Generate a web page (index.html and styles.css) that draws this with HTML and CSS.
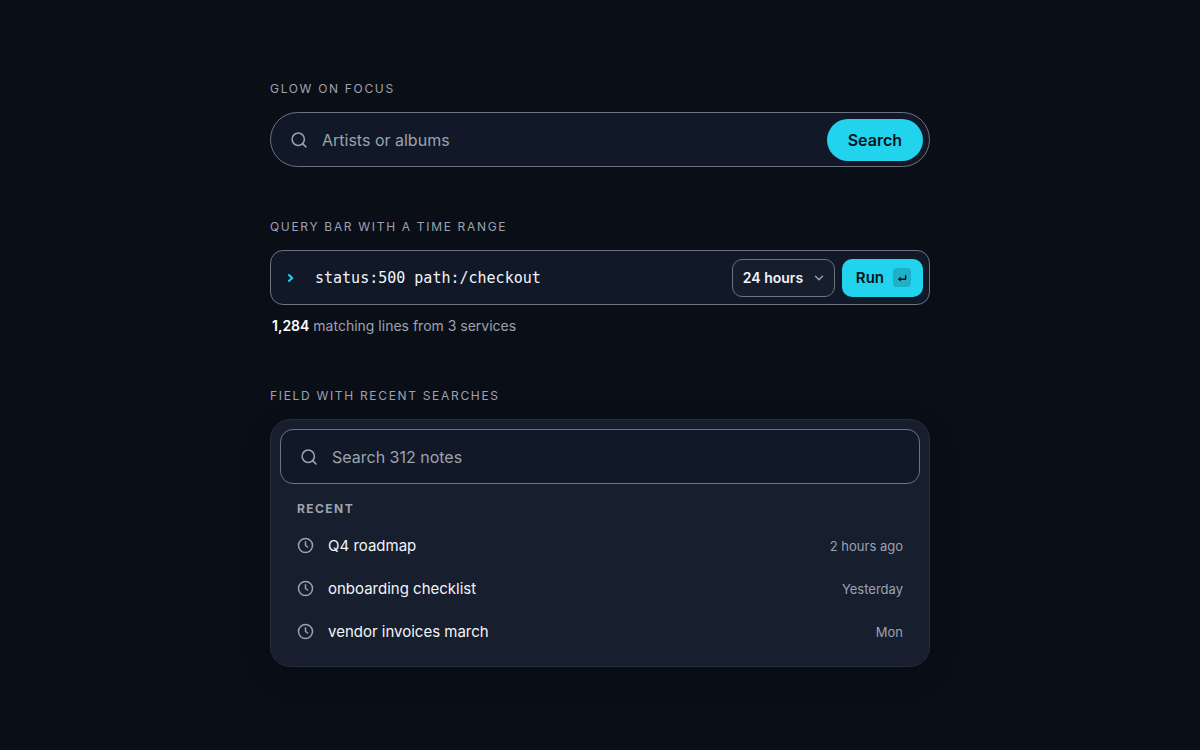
FILE: index.html
```html
<!DOCTYPE html>
<html lang="en">
<head>
<meta charset="UTF-8">
<meta name="viewport" content="width=device-width, initial-scale=1.0">
<title>Search bars</title>
<link rel="stylesheet" href="styles.css">
</head>
<body>
<main class="page">
    <section class="demo">
        <label class="demo-label" for="music">Glow on focus</label>
        <form class="field pill">
            <svg class="icon" viewBox="0 0 24 24" aria-hidden="true"><circle cx="11" cy="11" r="8.2"/><path d="M21.2 21.2l-4.4-4.4"/></svg>
            <input class="input" id="music" type="search" placeholder="Artists or albums">
            <button class="btn btn-round" type="button">Search</button>
        </form>
    </section>

    <section class="demo">
        <label class="demo-label" for="query">Query bar with a time range</label>
        <form class="field query">
            <svg class="prompt" viewBox="0 0 12 12" aria-hidden="true"><path d="M4 3l3.2 3L4 9"/></svg>
            <input class="input mono" id="query" type="text" value="status:500 path:/checkout" spellcheck="false">
            <div class="select-wrap">
                <select class="select" aria-label="Time range">
                    <option>24 hours</option>
                </select>
                <svg class="chevron" viewBox="0 0 10 10" aria-hidden="true"><path d="M1.5 3.2L5 6.8l3.5-3.6"/></svg>
            </div>
            <button class="btn btn-run" type="button">Run
                <kbd class="key"><svg viewBox="0 0 10 10" aria-hidden="true"><path d="M8.6 2.8v3.4H2"/><path class="head" d="M.8 6.2L4 3.8v4.8z"/></svg></kbd>
            </button>
        </form>
        <p class="hint"><strong>1,284</strong> matching lines from 3 services</p>
    </section>

    <section class="demo">
        <label class="demo-label" for="notes">Field with recent searches</label>
        <div class="panel">
            <div class="field">
                <svg class="icon" viewBox="0 0 24 24" aria-hidden="true"><circle cx="11" cy="11" r="8.2"/><path d="M21.2 21.2l-4.4-4.4"/></svg>
                <input class="input" id="notes" type="search" placeholder="Search 312 notes">
            </div>
            <h2 class="recent-title">Recent</h2>
            <ul class="recent">
                <li><button class="recent-item" type="button">
                    <svg class="clock" viewBox="0 0 16 16" aria-hidden="true"><circle cx="8" cy="8" r="6.6"/><path d="M8 4.4V8l2 1.4"/></svg>
                    <span class="recent-name">Q4 roadmap</span><span class="recent-time">2 hours ago</span>
                </button></li>
                <li><button class="recent-item" type="button">
                    <svg class="clock" viewBox="0 0 16 16" aria-hidden="true"><circle cx="8" cy="8" r="6.6"/><path d="M8 4.4V8l2 1.4"/></svg>
                    <span class="recent-name">onboarding checklist</span><span class="recent-time">Yesterday</span>
                </button></li>
                <li><button class="recent-item" type="button">
                    <svg class="clock" viewBox="0 0 16 16" aria-hidden="true"><circle cx="8" cy="8" r="6.6"/><path d="M8 4.4V8l2 1.4"/></svg>
                    <span class="recent-name">vendor invoices march</span><span class="recent-time">Mon</span>
                </button></li>
            </ul>
        </div>
    </section>
</main>
</body>
</html>
```
FILE: styles.css
```css
* { margin: 0; padding: 0; box-sizing: border-box; }
body {
    font-family: Inter, "Liberation Sans", sans-serif;
    background: #0a0e17;
    color: #f1f5f9;
    min-height: 100vh;
    display: flex;
    justify-content: center;
    align-items: center;
    padding: 24px 24px 28px;
}
button, input, select { font: inherit; color: inherit; }
button { border: none; cursor: pointer; }
svg { fill: none; stroke: currentColor; stroke-linecap: round; stroke-linejoin: round; flex: none; }

.page {
    width: 100%;
    max-width: 660px;
    display: flex;
    flex-direction: column;
    gap: 50px;
}
.demo-label {
    display: block;
    font-size: 12px;
    line-height: 20px;
    letter-spacing: 0.14em;
    text-transform: uppercase;
    color: #9ca3af;
    margin-bottom: 13px;
}

/* fields */
.field {
    display: flex;
    align-items: center;
    height: 55px;
    padding: 0 6px 0 19px;
    background: #111827;
    border: 1px solid #6b7280;
    border-radius: 13px;
}
.field:focus-within { border-color: #22d3ee; box-shadow: 0 0 0 4px rgba(34,211,238,0.2); }
.pill { border-radius: 28px; }
.query { padding: 0 6px 0 14px; }
.icon { width: 18px; height: 18px; stroke-width: 2; color: #9ca3af; }
.input {
    flex: 1;
    min-width: 0;
    height: 100%;
    margin-left: 14px;
    border: none;
    outline: none;
    background: none;
    font-size: 16px;
    appearance: none;
}
.input::placeholder { color: #9ca3af; opacity: 1; }
.mono {
    font-family: "DejaVu Sans Mono", monospace;
    font-size: 15px;
    margin-left: 18px;
}
.prompt { width: 12px; height: 12px; stroke-width: 2; color: #22d3ee; }

/* buttons */
.btn {
    background: #22d3ee;
    color: #06141b;
    font-weight: 600;
}
.btn:hover { background: #67e8f9; }
.btn-round {
    height: 42px;
    padding: 0 21px;
    border-radius: 21px;
    font-size: 16px;
}
.btn-run {
    display: flex;
    align-items: center;
    gap: 9px;
    height: 38px;
    margin-left: 7px;
    padding: 0 12px 0 14px;
    border-radius: 10px;
    font-size: 15px;
}
.key {
    display: flex;
    align-items: center;
    justify-content: center;
    width: 18px;
    height: 19px;
    border-radius: 4px;
    background: rgba(6,20,27,0.18);
}
.key svg { width: 10px; height: 10px; stroke-width: 1.4; }
.key .head { fill: currentColor; stroke: none; }

.select-wrap { display: grid; align-items: center; }
.select {
    grid-area: 1 / 1;
    width: 103px;
    height: 38px;
    padding: 0 28px 0 10px;
    background: #161d2c;
    border: 1px solid #6b7280;
    border-radius: 10px;
    font-size: 14px;
    font-weight: 600;
    appearance: none;
}
.chevron {
    grid-area: 1 / 1;
    justify-self: end;
    width: 10px;
    height: 10px;
    margin-right: 11px;
    stroke-width: 1.4;
    color: #9ca3af;
    pointer-events: none;
}
.hint {
    margin-top: 11px;
    padding-left: 2px;
    font-size: 14px;
    line-height: 20px;
    color: #9ca3af;
}
.hint strong { color: #fff; font-weight: 600; }

/* recent searches */
.panel {
    padding: 9px 9px 13px;
    background: #171e2d;
    border: 1px solid #252d3b;
    border-radius: 20px;
    box-shadow: 0 10px 30px rgba(0,0,0,0.15);
}
.recent-title {
    margin: 15px 0 5px 17px;
    font-size: 12px;
    line-height: 20px;
    font-weight: 700;
    letter-spacing: 0.12em;
    text-transform: uppercase;
    color: #9ca3af;
}
.recent { list-style: none; }
.recent-item {
    display: flex;
    align-items: center;
    width: 100%;
    height: 43px;
    padding: 0 17px;
    background: none;
    border-radius: 10px;
    text-align: left;
}
.recent-item:hover { background: #1f2937; }
.clock { width: 17px; height: 17px; stroke-width: 1.4; color: #9ca3af; }
.recent-name { flex: 1; margin-left: 14px; font-size: 15px; }
.recent-time { font-size: 13px; color: #9ca3af; }
```
